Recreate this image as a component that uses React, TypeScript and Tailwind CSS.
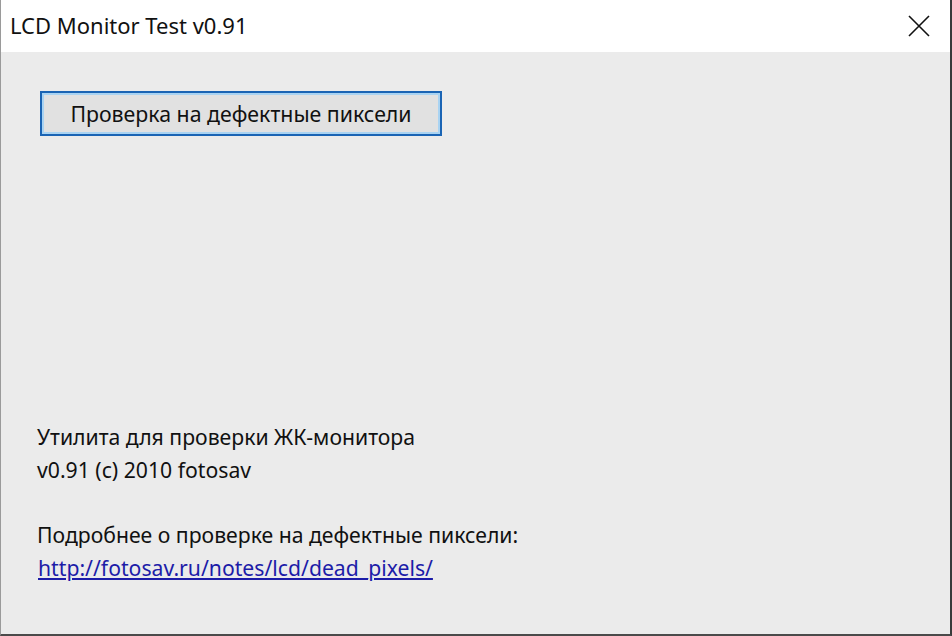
import React from 'react';

export default function App() {
  const font = { fontFamily: '"Noto Sans", "DejaVu Sans", sans-serif' };

  return (
    <div className="w-[952px] h-[636px] flex flex-col bg-[#ebebeb] border-l border-[#9a9a9a] border-r-2 border-r-[#3a3a3a] border-b-2 border-b-[#4a4a4a]" style={font}>
      {/* Title bar */}
      <div className="h-[52px] bg-white flex items-center justify-between shrink-0">
        <span className="pl-[9px] text-[22px] text-[#111] leading-none -mt-[2px]">LCD Monitor Test v0.91</span>
        <div className="w-[62px] h-full flex items-center justify-center">
          <svg width="22" height="22" viewBox="0 0 22 22" fill="none" stroke="#111" strokeWidth="1.6">
            <path d="M1 1L21 21M21 1L1 21" />
          </svg>
        </div>
      </div>

      {/* Body */}
      <div className="flex-1 flex flex-col pl-[36px] pt-[39px] pb-[50px] text-[#111]">
        <button className="ml-[3px] w-[402px] h-[45px] border-2 border-[#1a64b4] bg-[#e1e1e1] shadow-[inset_0_0_0_2px_#a9d3f2] text-[21.3px] text-[#111]">
          Проверка на дефектные пиксели
        </button>

        <div className="mt-auto flex flex-col text-[21.2px] leading-[33px]">
          <span>Утилита для проверки ЖК-монитора</span>
          <span>v0.91 (c) 2010 fotosav</span>
          <span className="mt-[32px]">Подробнее о проверке на дефектные пиксели:</span>
          <a className="text-[#1c1ca8] underline underline-offset-2 pl-[1px]" href="#">http://fotosav.ru/notes/lcd/dead_pixels/</a>
        </div>
      </div>
    </div>
  );
}
